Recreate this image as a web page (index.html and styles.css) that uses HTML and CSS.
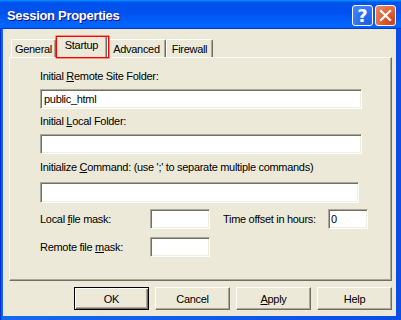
FILE: index.html
```html
<!DOCTYPE html>
<html>
<head>
<meta charset="utf-8">
<link rel="stylesheet" href="styles.css">
</head>
<body>
<div class="window">
  <div class="titlebar">
    <span class="title">Session Properties</span>
    <div class="tb-buttons">
      <div class="tb-btn help">?</div>
      <div class="tb-btn close">
        <svg width="13" height="13" viewBox="0 0 13 13"><path d="M2 2 L11 11 M11 2 L2 11" stroke="#fff" stroke-width="2.2" stroke-linecap="square"/></svg>
      </div>
    </div>
  </div>
  <div class="client">
    <div class="tabs">
      <div class="tab t-general">General</div>
      <div class="tab active t-startup">Startup</div>
      <div class="tab t-advanced">Advanced</div>
      <div class="tab t-firewall">Firewall</div>
    </div>
    <div class="panel">
      <div class="label l1">Initial <u>R</u>emote Site Folder:</div>
      <div class="field f1">public_html</div>
      <div class="label l2">Initial <u>L</u>ocal Folder:</div>
      <div class="field f2"></div>
      <div class="label l3">Initialize <u>C</u>ommand: (use ';' to separate multiple commands)</div>
      <div class="field f3"></div>
      <div class="row r1">
        <span class="rlabel">Local <u>f</u>ile mask:</span>
        <div class="field small"></div>
        <span class="rlabel2">Time offset in hours:</span>
        <div class="field tiny">0</div>
      </div>
      <div class="row r2">
        <span class="rlabel">Remote file <u>m</u>ask:</span>
        <div class="field small"></div>
      </div>
    </div>
    <div class="buttons">
      <div class="btn default">OK</div>
      <div class="btn">Cancel</div>
      <div class="btn"><u>A</u>pply</div>
      <div class="btn">Help</div>
    </div>
  </div>
</div>
</body>
</html>
```

FILE: styles.css
```css
* { box-sizing: border-box; }
html, body { margin: 0; padding: 0; }
body {
  width: 401px;
  height: 320px;
  overflow: hidden;
  font-family: "Liberation Sans", Arial, sans-serif;
  font-size: 11px;
  letter-spacing: -0.3px;
  color: #000;
}
u { text-decoration: underline; text-underline-offset: 1px; }
.window {
  width: 401px;
  height: 320px;
  display: flex;
  flex-direction: column;
  background: linear-gradient(90deg, #0019cf 0, #0b4de6 1px, #166aee 2px, #0b4de6 100%);
}
.titlebar {
  height: 29px;
  flex: none;
  display: flex;
  align-items: center;
  padding-left: 7px;
  background: linear-gradient(180deg, #0997ff 0, #0053ee 8%, #0050ee 40%, #0066ff 88%, #0066ff 93%, #005bff 95%, #003dd7 96%, #003dd7 100%);
}
.title {
  flex: 1;
  color: #fff;
  font-family: "Liberation Sans", Arial, sans-serif;
  font-weight: bold;
  font-size: 13px;
  letter-spacing: -0.3px;
  text-shadow: 1px 1px #0f1089;
  padding-top: 1px;
}
.tb-buttons {
  display: flex;
  gap: 2px;
  margin-right: 5px;
  margin-top: 2px;
}
.tb-btn {
  width: 21px;
  height: 21px;
  border: 1px solid #fff;
  border-radius: 3px;
  display: flex;
  align-items: center;
  justify-content: center;
  color: #fff;
}
.help {
  background: radial-gradient(circle at 80% 85%, #1c5fe8 0, #2d6cf0 40%, #4d8cf7 100%);
  font-family: "DejaVu Sans", sans-serif;
  font-weight: bold;
  font-size: 18px;
  line-height: 1;
  letter-spacing: 0;
  padding-top: 1px;
}
.close {
  background: radial-gradient(circle at 85% 85%, #cc4419 0, #e05a2e 40%, #ef8d6a 100%);
}
.client {
  flex: 1;
  margin: 0 5px 4px 3px;
  background: #ece9d8;
  display: flex;
  flex-direction: column;
}
.tabs {
  height: 28px;
  flex: none;
  display: flex;
  align-items: flex-end;
  padding-left: 8px;
  position: relative;
  z-index: 1;
}
.tab {
  height: 18px;
  padding-top: 3px;
  text-align: center;
  background: #ece9d8;
  border-top: 1px solid #fff;
  border-left: 1px solid #fff;
  border-right: 1px solid #716f64;
  box-shadow: inset -1px 0 #aca899;
  border-radius: 2px 2px 0 0;
  line-height: 13px;
}
.t-general { width: 45px; }
.t-startup { width: 51px; }
.t-advanced { width: 59px; }
.t-firewall { width: 47px; }
.tab.active {
  height: 22px;
  margin-bottom: -1px;
  padding-top: 2px;
  position: relative;
}
.tab.active::after {
  content: "";
  position: absolute;
  left: -1px;
  top: -1px;
  width: 51px;
  height: 20px;
  border: 1px solid #ff0000;
  box-shadow: 0 0 0 0.5px #ff3030;
}
.panel {
  flex: none;
  width: 383px;
  height: 224px;
  margin-left: 6px;
  border-top: 1px solid #fff;
  border-left: 1px solid #fff;
  border-right: 1px solid #716f64;
  border-bottom: 1px solid #716f64;
  box-shadow: inset -1px -1px #aca899;
  padding: 0 0 0 30px;
}
.label {
  height: 13px;
  line-height: 13px;
  white-space: nowrap;
}
.l1 { margin-top: 12px; }
.l2 { margin-top: 6px; }
.l3 { margin-top: 7px; }
.field {
  height: 20px;
  background: #fff;
  border-top: 1px solid #aca899;
  border-left: 1px solid #aca899;
  border-right: 1px solid #fff;
  border-bottom: 1px solid #fff;
  box-shadow: inset 1px 1px #716f64, inset -1px -1px #f1efe2;
  padding: 3px 0 0 3px;
  line-height: 13px;
}
.f1 { width: 322px; margin-top: 6px; }
.f2 { width: 322px; margin-top: 6px; }
.f3 { width: 319px; height: 21px; margin-top: 8px; }
.row {
  display: flex;
  align-items: center;
  height: 20px;
}
.r1 { margin-top: 6px; }
.r2 { margin-top: 8px; }
.rlabel { width: 110px; white-space: nowrap; }
.rlabel2 { width: 105px; margin-left: 13px; white-space: nowrap; }
.small { width: 60px; }
.tiny { width: 40px; padding-left: 2px; }
.buttons {
  display: flex;
  justify-content: flex-end;
  gap: 6px;
  margin-top: 6px;
  padding-right: 4px;
}
.btn {
  width: 75px;
  height: 23px;
  display: flex;
  align-items: center;
  justify-content: center;
  background: #ece9d8;
  border-top: 1px solid #fff;
  border-left: 1px solid #fff;
  border-right: 1px solid #716f64;
  border-bottom: 1px solid #716f64;
  box-shadow: inset -1px -1px #aca899;
  padding-top: 1px;
}
.btn.default {
  border: 1px solid #000;
  box-shadow: inset 1px 1px #fff, inset -1px -1px #716f64, inset -2px -2px #aca899;
}
```
